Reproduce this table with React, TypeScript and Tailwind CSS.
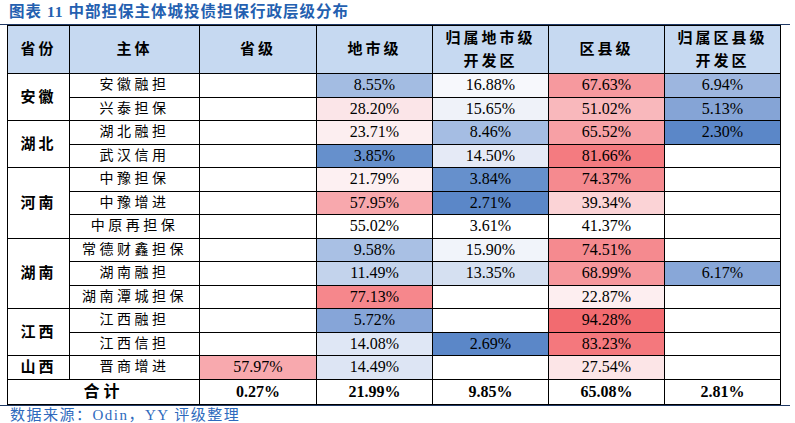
import React from "react";

type Cell = { v: string; bg?: string };
type Row = { prov?: string; span?: number; name: string; c: Cell[] };

const W = "#ffffff";
const rows: Row[] = [
  { prov: "安徽", span: 2, name: "安徽融担", c: [{ v: "" }, { v: "8.55%", bg: "#a3bce2" }, { v: "16.88%", bg: "#f7f8fc" }, { v: "67.63%", bg: "#f6999e" }, { v: "6.94%", bg: "#9db6df" }] },
  { name: "兴泰担保", c: [{ v: "" }, { v: "28.20%", bg: "#fbe5e8" }, { v: "15.65%", bg: "#eff2f9" }, { v: "51.02%", bg: "#f9b8bc" }, { v: "5.13%", bg: "#85a4d6" }] },
  { prov: "湖北", span: 2, name: "湖北融担", c: [{ v: "" }, { v: "23.71%", bg: "#fceef0" }, { v: "8.46%", bg: "#a5bde3" }, { v: "65.52%", bg: "#f7a0a5" }, { v: "2.30%", bg: "#5b87c8" }] },
  { name: "武汉信用", c: [{ v: "" }, { v: "3.85%", bg: "#6690cc" }, { v: "14.50%", bg: "#e5eaf6" }, { v: "81.66%", bg: "#f47b80" }, { v: "" }] },
  { prov: "河南", span: 3, name: "中豫担保", c: [{ v: "" }, { v: "21.79%", bg: "#fdf0f2" }, { v: "3.84%", bg: "#6690cc" }, { v: "74.37%", bg: "#f58a8f" }, { v: "" }] },
  { name: "中豫增进", c: [{ v: "" }, { v: "57.95%", bg: "#f8a8ad" }, { v: "2.71%", bg: "#5b87c8" }, { v: "39.34%", bg: "#fbd3d6" }, { v: "" }] },
  { name: "中原再担保", c: [{ v: "" }, { v: "55.02%", bg: W }, { v: "3.61%", bg: W }, { v: "41.37%", bg: W }, { v: "" }] },
  { prov: "湖南", span: 3, name: "常德财鑫担保", c: [{ v: "" }, { v: "9.58%", bg: "#a9c0e4" }, { v: "15.90%", bg: "#f1f4fa" }, { v: "74.51%", bg: "#f58a8f" }, { v: "" }] },
  { name: "湖南融担", c: [{ v: "" }, { v: "11.49%", bg: "#c3d3ec" }, { v: "13.35%", bg: "#d5e0f1" }, { v: "68.99%", bg: "#f6979c" }, { v: "6.17%", bg: "#88a7d8" }] },
  { name: "湖南潭城担保", c: [{ v: "" }, { v: "77.13%", bg: "#f6878c" }, { v: "" }, { v: "22.87%", bg: "#fdeef0" }, { v: "" }] },
  { prov: "江西", span: 2, name: "江西融担", c: [{ v: "" }, { v: "5.72%", bg: "#86a5d8" }, { v: "" }, { v: "94.28%", bg: "#f26b70" }, { v: "" }] },
  { name: "江西信担", c: [{ v: "" }, { v: "14.08%", bg: "#dfe7f5" }, { v: "2.69%", bg: "#5b87c8" }, { v: "83.23%", bg: "#f4787d" }, { v: "" }] },
  { prov: "山西", span: 1, name: "晋商增进", c: [{ v: "57.97%", bg: "#f8a9ae" }, { v: "14.49%", bg: "#dde5f4" }, { v: "" }, { v: "27.54%", bg: "#fce5e7" }, { v: "" }] },
];

const serif = { fontFamily: '"Liberation Serif", "Noto Sans CJK SC", serif' };

export default function App() {
  return (
    <div className="w-[795px] h-[423px] bg-white overflow-hidden relative" style={serif}>
      <div className="h-[24px] pl-[9px] pt-[2px] text-[15.5px] font-bold text-[#2460b0] tracking-[1px] leading-[20px]">
        图表 11 中部担保主体城投债担保行政层级分布
      </div>
      <div className="w-[790px] border-t-[1.5px] border-[#1f3864]" />
      <div className="pl-[7px]">
        <table className="border-collapse table-fixed text-black" style={{ width: 773 }}>
          <colgroup>
            <col style={{ width: 62 }} />
            <col style={{ width: 130 }} />
            <col style={{ width: 117 }} />
            <col style={{ width: 116 }} />
            <col style={{ width: 116 }} />
            <col style={{ width: 116 }} />
            <col style={{ width: 116 }} />
          </colgroup>
          <thead>
            <tr className="bg-[#c6d9f1] h-[48px] text-[15px] font-bold">
              <th className="border border-black tracking-[3px]">省份</th>
              <th className="border border-black tracking-[3px]">主体</th>
              <th className="border border-black tracking-[3px]">省级</th>
              <th className="border border-black tracking-[3px]">地市级</th>
              <th className="border border-black tracking-[3px] leading-[23px]">归属地市级<br />开发区</th>
              <th className="border border-black tracking-[3px]">区县级</th>
              <th className="border border-black tracking-[3px] leading-[23px]">归属区县级<br />开发区</th>
            </tr>
          </thead>
          <tbody>
            {rows.map((r, i) => (
              <tr key={i} className="h-[23.5px]">
                {r.prov && (
                  <td rowSpan={r.span} className="border border-black text-center font-bold text-[15px] tracking-[3px] p-0">
                    {r.prov}
                  </td>
                )}
                <td className="border border-black text-center text-[14px] tracking-[3.5px] p-0 leading-[22px]">{r.name}</td>
                {r.c.map((c, j) => (
                  <td
                    key={j}
                    className="border border-black text-center text-[16px] p-0 leading-[22px]"
                    style={{ backgroundColor: c.bg || "#ffffff" }}
                  >
                    {c.v}
                  </td>
                ))}
              </tr>
            ))}
            <tr className="h-[23px] font-bold text-[16px]">
              <td colSpan={2} className="border border-black text-center tracking-[4px] p-0">合计</td>
              <td className="border border-black text-center p-0">0.27%</td>
              <td className="border border-black text-center p-0">21.99%</td>
              <td className="border border-black text-center p-0">9.85%</td>
              <td className="border border-black text-center p-0">65.08%</td>
              <td className="border border-black text-center p-0">2.81%</td>
            </tr>
          </tbody>
        </table>
      </div>
      <div className="w-[790px] border-t-[1.5px] border-[#1f3864]" />
      <div className="pl-[10px] text-[15px] text-[#2e6abd] tracking-[1.5px] leading-[18px]">
        数据来源：Odin，YY 评级整理
      </div>
    </div>
  );
}
